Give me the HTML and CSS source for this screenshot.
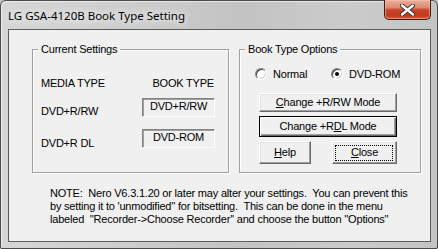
FILE: index.html
```html
<!DOCTYPE html>
<html>
<head>
<meta charset="utf-8">
<link rel="stylesheet" href="styles.css">
</head>
<body>
<div class="window">
  <div class="titlebar">
    <span class="title">LG GSA-4120B Book Type Setting</span>
    <div class="close-btn">
      <svg width="17" height="12" viewBox="0 0 17 12">
        <path d="M3 1.5 L14 10.5 M14 1.5 L3 10.5" stroke="#3a2a26" stroke-width="4.2" stroke-linecap="round"/>
        <path d="M3 1.5 L14 10.5 M14 1.5 L3 10.5" stroke="#ffffff" stroke-width="2.4" stroke-linecap="round"/>
      </svg>
    </div>
  </div>
  <div class="client">
    <div class="groups">
      <div class="group group-current">
        <span class="legend">Current Settings</span>
        <div class="row head"><span>MEDIA TYPE</span><span class="book-head">BOOK TYPE</span></div>
        <div class="row row2"><span class="lbl">DVD+R/RW</span><span class="field">DVD+R/RW</span></div>
        <div class="row row3"><span class="lbl">DVD+R DL</span><span class="field">DVD-ROM</span></div>
      </div>
      <div class="group group-options">
        <span class="legend">Book Type Options</span>
        <div class="radios">
          <div class="radio-option opt-normal"><span class="radio"></span><span class="radio-label">Normal</span></div>
          <div class="radio-option"><span class="radio checked"></span><span class="radio-label">DVD-ROM</span></div>
        </div>
        <div class="btn wide b1"><span class="btn-text"><u>C</u>hange +R/RW Mode</span></div>
        <div class="btn wide default b2"><span class="btn-text">Change +R<u>D</u>L Mode</span></div>
        <div class="btn-row">
          <div class="btn small help"><span class="btn-text"><u>H</u>elp</span></div>
          <div class="btn small close focused"><span class="btn-text"><u>C</u>lose</span></div>
        </div>
      </div>
    </div>
    <p class="note">NOTE:  Nero V6.3.1.20 or later may alter your settings.  You can prevent this<br>by setting it to 'unmodified'' for bitsetting.  This can be done in the menu<br>labeled  ''Recorder-&gt;Choose Recorder'' and choose the button ''Options''</p>
  </div>
</div>
</body>
</html>
```

FILE: styles.css
```css
html, body {
  margin: 0;
  padding: 0;
  width: 438px;
  height: 249px;
  overflow: hidden;
  background: #bdbdbd;
}

.window {
  box-sizing: border-box;
  width: 438px;
  height: 249px;
  border: 1px solid #4a4a4a;
  border-radius: 6px 6px 2px 2px;
  background: linear-gradient(90deg, #d6d6d6 0%, #cdcdcd 30%, #c3c3c3 55%, #cbcbcb 80%, #c4c4c4 100%);
  display: flex;
  flex-direction: column;
  padding: 0 6px 6px 7px;
  box-shadow: inset 1px 1px 0 rgba(255,255,255,0.6);
}

.titlebar {
  height: 28px;
  display: flex;
  align-items: flex-start;
  justify-content: space-between;
  flex-shrink: 0;
}

.title {
  font-family: "Noto Sans", "Open Sans", sans-serif;
  font-size: 11.5px;
  line-height: 16px;
  color: #000;
  padding-top: 7px;
  text-shadow: 0 0 8px #f4f4f4, 0 0 6px #f4f4f4;
}

.close-btn {
  box-sizing: border-box;
  width: 47px;
  height: 20px;
  margin-top: -1px;
  border: 1px solid #3d1a12;
  border-top: none;
  border-radius: 0 0 5px 5px;
  background: linear-gradient(180deg, #eab09e 0%, #dc8a70 40%, #c8452a 52%, #c23a1e 80%, #d05a38 100%);
  box-shadow: inset 0 0 0 1px rgba(255,200,180,0.5);
  display: flex;
  align-items: center;
  justify-content: center;
}

.close-btn svg {
  display: block;
  margin-top: 1px;
}

.client {
  flex: 1;
  background: #f0f0f0;
  border: 1px solid #5c5c5c;
  font-family: "Liberation Sans", Arial, sans-serif;
  font-size: 11px;
  letter-spacing: -0.2px;
  color: #000;
  padding: 19px 0 0 23px;
}

.groups {
  display: flex;
  gap: 10px;
}

.group {
  position: relative;
  box-sizing: border-box;
  height: 124px;
  border: 1px solid #a0a0a0;
  box-shadow: 1px 1px 0 #ffffff, inset 1px 1px 0 #ffffff;
}

.group-current {
  width: 197px;
  padding: 0 13px 0 8px;
}

.group-options {
  width: 182px;
  padding: 0;
  display: flex;
  flex-direction: column;
}

.legend {
  position: absolute;
  top: -7px;
  left: 5px;
  padding: 0 3px;
  background: #f0f0f0;
  line-height: 13px;
  white-space: nowrap;
}

.row {
  display: flex;
  justify-content: space-between;
  align-items: flex-start;
  line-height: 13px;
}

.head {
  margin-top: 27px;
  padding-right: 1px;
}

.row2 {
  margin-top: 8px;
}

.row2 .lbl {
  margin-top: 7px;
}

.row3 {
  margin-top: 11px;
}

.row3 .lbl {
  margin-top: 8px;
}

.field {
  box-sizing: border-box;
  width: 73px;
  height: 19px;
  border-top: 1px solid #808080;
  border-left: 1px solid #808080;
  border-right: 1px solid #ffffff;
  border-bottom: 1px solid #ffffff;
  box-shadow: inset 1px 1px 0 #a0a0a0;
  text-align: center;
  line-height: 15px;
}

.radios {
  display: flex;
  align-items: center;
  margin-top: 17px;
  margin-left: 15px;
  height: 13px;
}

.radio-option {
  display: flex;
  align-items: center;
  white-space: nowrap;
}

.opt-normal {
  width: 76px;
}

.radio {
  box-sizing: border-box;
  width: 12px;
  height: 12px;
  border-radius: 50%;
  border: 1px solid;
  border-color: #808080 #ffffff #ffffff #808080;
  background: #ffffff;
  box-shadow: inset 1px 1px 0 #404040, inset -1px -1px 0 #d4d0c8;
  position: relative;
  flex-shrink: 0;
}

.radio.checked::after {
  content: "";
  position: absolute;
  left: 3px;
  top: 3px;
  width: 4px;
  height: 4px;
  border-radius: 50%;
  background: #000;
}

.radio-label {
  margin-left: 6px;
}

.btn {
  position: relative;
  box-sizing: border-box;
  background: #f0f0f0;
  border: 1px solid;
  border-color: #ffffff #696969 #696969 #ffffff;
  box-shadow: inset -1px -1px 0 #a0a0a0, inset 1px 1px 0 #e3e3e3;
  display: flex;
  align-items: center;
  justify-content: center;
  line-height: 13px;
}

.btn.wide {
  width: 138px;
  margin-left: 19px;
}

.b1 {
  height: 19px;
  margin-top: 13px;
}

.b2 {
  height: 21px;
  margin-top: 4px;
}

.btn.default {
  border: 1px solid #000;
  box-shadow: inset 1px 1px 0 #ffffff, inset -1px -1px 0 #696969, inset -2px -2px 0 #a0a0a0;
}

.btn-row {
  display: flex;
  margin-left: 19px;
  margin-top: 4px;
  gap: 21px;
}

.btn.small {
  height: 23px;
}

.help {
  width: 52px;
}

.close {
  width: 65px;
}

.focused::after {
  content: "";
  position: absolute;
  left: 2px;
  top: 3px;
  right: 3px;
  bottom: 2px;
  border: 1px dotted #000;
}

.note {
  margin: 14px 0 0 18px;
  line-height: 13px;
  white-space: pre;
}
```
